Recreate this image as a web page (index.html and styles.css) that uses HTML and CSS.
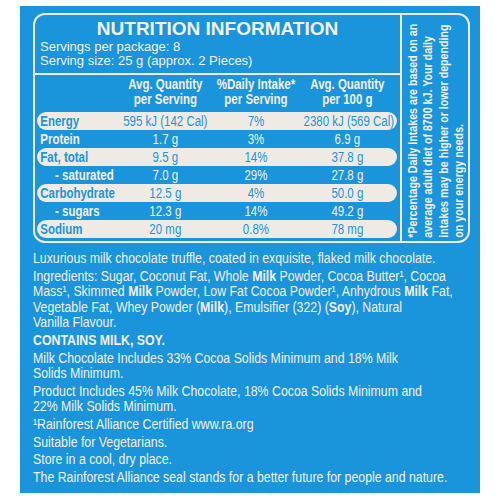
FILE: index.html
```html
<!DOCTYPE html>
<html lang="en">
<head>
    <meta charset="UTF-8">
    <title>Nutrition Information</title>
    <link rel="stylesheet" href="styles.css">
</head>
<body>
    <div class="panel">
        <div class="nip">
            <div class="nip-main">
                <div class="nip-head">
                    <h1>NUTRITION INFORMATION</h1>
                    <p class="serv">Servings per package: 8<br>Serving size: 25 g (approx. 2 Pieces)</p>
                </div>
                <div class="row head-row">
                    <span></span>
                    <span>Avg. Quantity<br>per Serving</span>
                    <span>%Daily Intake*<br>per Serving</span>
                    <span>Avg. Quantity<br>per 100 g</span>
                </div>
                <div class="row pill">
                    <span class="lbl">Energy</span><span>595 kJ (142 Cal)</span><span>7%</span><span>2380 kJ (569 Cal)</span>
                </div>
                <div class="row">
                    <span class="lbl">Protein</span><span>1.7 g</span><span>3%</span><span>6.9 g</span>
                </div>
                <div class="row pill">
                    <span class="lbl">Fat, total</span><span>9.5 g</span><span>14%</span><span>37.8 g</span>
                </div>
                <div class="row">
                    <span class="lbl sub">- saturated</span><span>7.0 g</span><span>29%</span><span>27.8 g</span>
                </div>
                <div class="row pill">
                    <span class="lbl">Carbohydrate</span><span>12.5 g</span><span>4%</span><span>50.0 g</span>
                </div>
                <div class="row">
                    <span class="lbl sub">- sugars</span><span>12.3 g</span><span>14%</span><span>49.2 g</span>
                </div>
                <div class="row pill">
                    <span class="lbl">Sodium</span><span>20 mg</span><span>0.8%</span><span>78 mg</span>
                </div>
            </div>
            <div class="nip-side">
                <div class="side-inner">
                    <p>*Percentage Daily Intakes are based on an<br>average adult diet of 8700 kJ. Your daily<br>intakes may be higher or lower depending<br>on your energy needs.</p>
                </div>
            </div>
        </div>

        <div class="info">
            <p>Luxurious milk chocolate truffle, coated in exquisite, flaked milk chocolate.</p>
            <p>Ingredients: Sugar, Coconut Fat, Whole <b>Milk</b> Powder, Cocoa Butter¹, Cocoa<br>Mass¹, Skimmed <b>Milk</b> Powder, Low Fat Cocoa Powder¹, Anhydrous <b>Milk</b> Fat,<br>Vegetable Fat, Whey Powder (<b>Milk</b>), Emulsifier (322) (<b>Soy</b>), Natural<br>Vanilla Flavour.</p>
            <p><b>CONTAINS MILK, SOY.</b></p>
            <p>Milk Chocolate Includes 33% Cocoa Solids Minimum and 18% Milk<br>Solids Minimum.</p>
            <p>Product Includes 45% Milk Chocolate, 18% Cocoa Solids Minimum and<br>22% Milk Solids Minimum.</p>
            <p>¹Rainforest Alliance Certified www.ra.org</p>
            <p>Suitable for Vegetarians.</p>
            <p>Store in a cool, dry place.</p>
            <p>The Rainforest Alliance seal stands for a better future for people and nature.</p>
        </div>
    </div>
</body>
</html>
```

FILE: styles.css
```css
/* no narrow face is installed, so condensed text is Liberation Sans squeezed with scaleX */
body {
    margin: 0;
    background-color: #fff;
    font-family: "Liberation Sans", Arial, sans-serif;
    overflow: hidden;
}

.panel {
    margin: 6px 0 0 20px;
    width: 460px;
    height: 487px;
    box-sizing: border-box;
    padding: 7px 10px 0 13px;
    background-color: #1a95db;
    color: #f4f0ea;
    overflow: hidden;
}

.nip {
    display: flex;
    width: 437px;
    height: 230px;
    box-sizing: border-box;
    border: 2px solid #efebe4;
    border-radius: 12px;
}

.nip-main {
    flex: 0 0 365px;
    min-width: 0;
}

.nip-head {
    border-bottom: 2px solid #efebe4;
    padding: 3px 0 5px 5px;
}

h1 {
    margin: 0 0 0 -5px;
    text-align: center;
    font-size: 19px;
    line-height: 22px;
    font-weight: bold;
    color: #f4f0ea;
}

.serv {
    margin: 0;
    font-size: 13px;
    line-height: 14px;
}

.row {
    display: grid;
    grid-template-columns: 104px 105px 116px 1fr;
    align-items: center;
    width: 439px;
    height: 18px;
    margin-left: 2px;
    font-size: 14px;
    text-align: center;
    white-space: nowrap;
    transform: scaleX(0.82);
    transform-origin: left top;
}

.row .lbl {
    text-align: left;
    font-weight: bold;
    padding-left: 4px;
}

.row .lbl.sub {
    padding-left: 22px;
}

.row span:last-child {
    padding-right: 7px;
}

.pill {
    background-color: #efebe4;
    color: #1a95db;
    border-radius: 11px / 9px;
}

.head-row {
    height: auto;
    padding: 2px 0 5px;
    font-weight: bold;
    line-height: 15px;
}

.nip-side {
    flex: 1;
    min-width: 0;
    border-left: 2px solid #efebe4;
}

.side-inner {
    height: 100%;
    transform: rotate(180deg);
}

.side-inner p {
    width: 60px;
    height: 100%;
    box-sizing: border-box;
    margin: 0 auto;
    padding-top: 4px;
    writing-mode: vertical-rl;
    white-space: nowrap;
    font-size: 13px;
    font-weight: bold;
    line-height: 15.3px;
    transform: scaleY(0.82);
    transform-origin: center top;
}

.info {
    width: 508px;
    margin-top: 8px;
    font-size: 14px;
    line-height: 15.5px;
    white-space: nowrap;
    transform: scaleX(0.88);
    transform-origin: left top;
}

.info p {
    margin: 0 0 2.2px;
}
```
